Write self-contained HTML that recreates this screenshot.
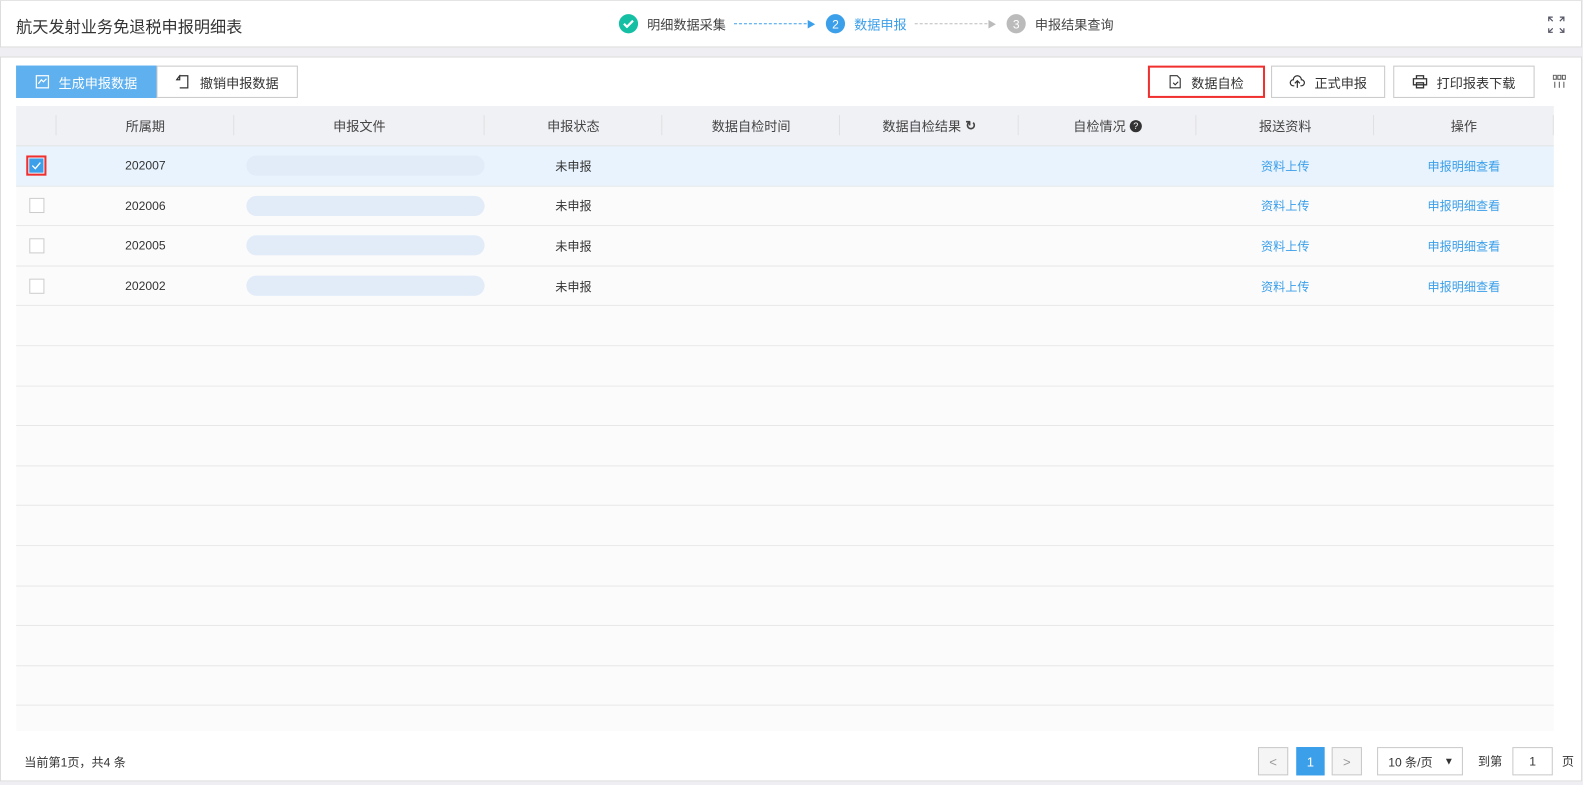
<!DOCTYPE html>
<html><head><meta charset="utf-8"><style>
*{box-sizing:border-box;margin:0;padding:0}
html,body{width:1583px;height:785px;overflow:hidden}
body{background:#eeeef3;font-family:"Liberation Sans","Noto Sans CJK SC",sans-serif;font-size:12px;color:#333}
#wrap{position:absolute;left:0;top:0;width:1568px;height:778px;transform:scale(1.0096);transform-origin:0 0}
.hdr{position:absolute;left:0;top:0;width:1567px;height:47px;background:#fff;border:1px solid #ddd;border-top:1px solid #e4e4e4}
.title{position:absolute;left:15px;top:12px;font-size:16px;color:#333}
.steps{position:absolute;left:612px;top:13px;display:flex;align-items:center;font-size:13px}
.dot{width:19px;height:19px;border-radius:50%;color:#fff;font-size:12px;display:flex;align-items:center;justify-content:center;margin-right:9px}
.dash{width:72px;border-top:1px dashed #3b9fea;margin:0 0 0 8px;position:relative}
.main{position:absolute;left:0;top:56px;width:1567px;height:718px;background:#fff;border:1px solid #ddd}
.btn{position:absolute;top:8px;height:32px;border:1px solid #c8c8c8;background:#fff;display:flex;align-items:center;justify-content:center;font-size:13px;color:#333}
.tbl{position:absolute;left:15px;top:48px;width:1523px}
.th{height:40px;background:#f0f1f5;display:flex;border-bottom:1px solid #e2e2e2}
.th div,.tr div{display:flex;align-items:center;justify-content:center}
.th div{font-size:13px;color:#444;position:relative}
.th div:after{content:"";position:absolute;right:0;top:9px;height:20px;border-right:1px solid #e0e0e0}
.tr{height:39.6px;display:flex;border-bottom:1px solid #e6e6e6;background:#fbfbfb;font-size:12px}
.blur{width:245px;height:20px;border-radius:10px;background:#e2ecf9;margin-left:12px}
.cb{width:15px;height:15px;border:1px solid #ccc;background:#fff}
a{color:#3b9fea;text-decoration:none}
.pg{position:absolute;top:683px;height:28px;border:1px solid #c8c8c8;display:flex;align-items:center;justify-content:center;font-size:13px}
</style></head><body><div id="wrap">
<div class="hdr">
<div class="title">航天发射业务免退税申报明细表</div>
<div class="steps">
<div class="dot" style="background:#14bfa4"><svg width="11" height="9" viewBox="0 0 11 9"><path d="M1 4.5l3 3 6-6" stroke="#fff" stroke-width="2.2" fill="none"/></svg></div>
<span style="color:#444">明细数据采集</span>
<div class="dash"></div><span style="color:#3b9fea;font-size:9px;margin-right:10px">▶</span>
<div class="dot" style="background:#3b9fea">2</div><span style="color:#3b9fea">数据申报</span>
<div class="dash" style="border-color:#bbb"></div><span style="color:#bbb;font-size:9px;margin-right:10px">▶</span>
<div class="dot" style="background:#bbb">3</div><span style="color:#444">申报结果查询</span>
</div>
<svg style="position:absolute;left:1532px;top:15px" width="17" height="17" viewBox="0 0 17 17" fill="none" stroke="#556" stroke-width="1.2"><path d="M1 5V1h4M1 1l4 4M16 5V1h-4M16 1l-4 4M1 12v4h4M1 16l4-4M16 12v4h-4M16 16l-4-4"/></svg>
</div>
<div class="main">
<div class="btn" style="left:15px;width:139px;background:#5fb0ef;border-color:#5fb0ef;color:#fff"><svg width="14" height="14" viewBox="0 0 14 14" fill="none" stroke="#fff" stroke-width="1.2" style="margin-right:9px"><rect x="1" y="1" width="12" height="12"/><path d="M3 9l3-4 2 2 3-3"/></svg>生成申报数据</div>
<div class="btn" style="left:154px;width:140px"><svg width="13" height="14" viewBox="0 0 13 14" fill="none" stroke="#333" stroke-width="1.2" style="margin-right:11px"><path d="M4 1h8v12H4M1 5l3-4v4z"/></svg>撤销申报数据</div>
<div class="btn" style="left:1136px;width:116px;border:2px solid #f0302e"><svg width="12" height="14" viewBox="0 0 12 14" fill="none" stroke="#333" stroke-width="1.1" style="margin-right:10px"><path d="M1 1h7l3 3v9H1z M4 8l2 2 3-3"/></svg>数据自检</div>
<div class="btn" style="left:1258px;width:113px"><svg width="16" height="14" viewBox="0 0 16 14" fill="none" stroke="#333" stroke-width="1.2" style="margin-right:9px"><path d="M5 11H4a3 3 0 010-6 4 4 0 018 0 3 3 0 010 6h-1M8 13V6M5.5 8.5L8 6l2.5 2.5"/></svg>正式申报</div>
<div class="btn" style="left:1379px;width:140px"><svg width="15" height="14" viewBox="0 0 15 14" fill="none" stroke="#333" stroke-width="1.3" style="margin-right:9px"><path d="M4 4V1h7v3M1 4h13v6H1zM4 8h7v5H4z"/></svg>打印报表下载</div>
<svg style="position:absolute;left:1537px;top:17px" width="13" height="13" viewBox="0 0 13 13" fill="none" stroke="#555"><rect x="0.5" y="0.5" width="3" height="4"/><rect x="5" y="0.5" width="3" height="4"/><rect x="9.5" y="0.5" width="3" height="4"/><path d="M2 7v6M6.5 7v6M11 7v6"/></svg>
<div class="tbl">
<div class="th"><div style="width:40px"></div><div style="width:176px">所属期</div><div style="width:248px">申报文件</div><div style="width:176px">申报状态</div><div style="width:176px">数据自检时间</div><div style="width:177px">数据自检结果 <span style="margin-left:4px;font-weight:bold">↻</span></div><div style="width:176px">自检情况 <span style="margin-left:4px;width:12px;height:12px;border-radius:50%;background:#333;color:#fff;font-size:9px;display:inline-flex;align-items:center;justify-content:center">?</span></div><div style="width:176px">报送资料</div><div style="width:178px">操作</div></div>
<div class="tr" style="background:#e8f3fd"><div style="width:40px"><span style="border:2px solid #f0302e;display:flex;padding:1px"><span style="width:14px;height:14px;background:#3b9fea;display:flex;align-items:center;justify-content:center"><svg width="10" height="8" viewBox="0 0 10 8"><path d="M1 4l3 3 5-6" stroke="#fff" stroke-width="1.3" fill="none"/></svg></span></span></div><div style="width:176px">202007</div><div style="width:248px"><span class="blur"></span></div><div style="width:176px">未申报</div><div style="width:529px"></div><div style="width:176px"><a>资料上传</a></div><div style="width:178px"><a>申报明细查看</a></div></div>
<div class="tr"><div style="width:40px"><span class="cb"></span></div><div style="width:176px">202006</div><div style="width:248px"><span class="blur"></span></div><div style="width:176px">未申报</div><div style="width:529px"></div><div style="width:176px"><a>资料上传</a></div><div style="width:178px"><a>申报明细查看</a></div></div>
<div class="tr"><div style="width:40px"><span class="cb"></span></div><div style="width:176px">202005</div><div style="width:248px"><span class="blur"></span></div><div style="width:176px">未申报</div><div style="width:529px"></div><div style="width:176px"><a>资料上传</a></div><div style="width:178px"><a>申报明细查看</a></div></div>
<div class="tr"><div style="width:40px"><span class="cb"></span></div><div style="width:176px">202002</div><div style="width:248px"><span class="blur"></span></div><div style="width:176px">未申报</div><div style="width:529px"></div><div style="width:176px"><a>资料上传</a></div><div style="width:178px"><a>申报明细查看</a></div></div>
<div class="tr"></div><div class="tr"></div><div class="tr"></div><div class="tr"></div><div class="tr"></div><div class="tr"></div><div class="tr"></div><div class="tr"></div><div class="tr"></div><div class="tr"></div>
<div style="height:25px;background:#fbfbfb"></div>
</div>
<div style="position:absolute;left:23px;top:689px;font-size:12px">当前第1页，共4 条</div>
<div class="pg" style="left:1245px;width:30px;background:#f5f5f5;color:#999">&lt;</div>
<div class="pg" style="left:1283px;width:28px;background:#3b9fea;border-color:#3b9fea;color:#fff">1</div>
<div class="pg" style="left:1318px;width:30px;background:#f5f5f5;color:#999">&gt;</div>
<div class="pg" style="left:1363px;width:85px;justify-content:space-between;padding:0 8px 0 10px;font-size:12px">10 条/页 <span style="font-size:10px">▼</span></div>
<div style="position:absolute;left:1463px;top:688px;font-size:12px">到第</div>
<div class="pg" style="left:1497px;width:40px;font-size:12px">1</div>
<div style="position:absolute;left:1546px;top:688px;font-size:12px">页</div>
</div>
</div></body></html>
